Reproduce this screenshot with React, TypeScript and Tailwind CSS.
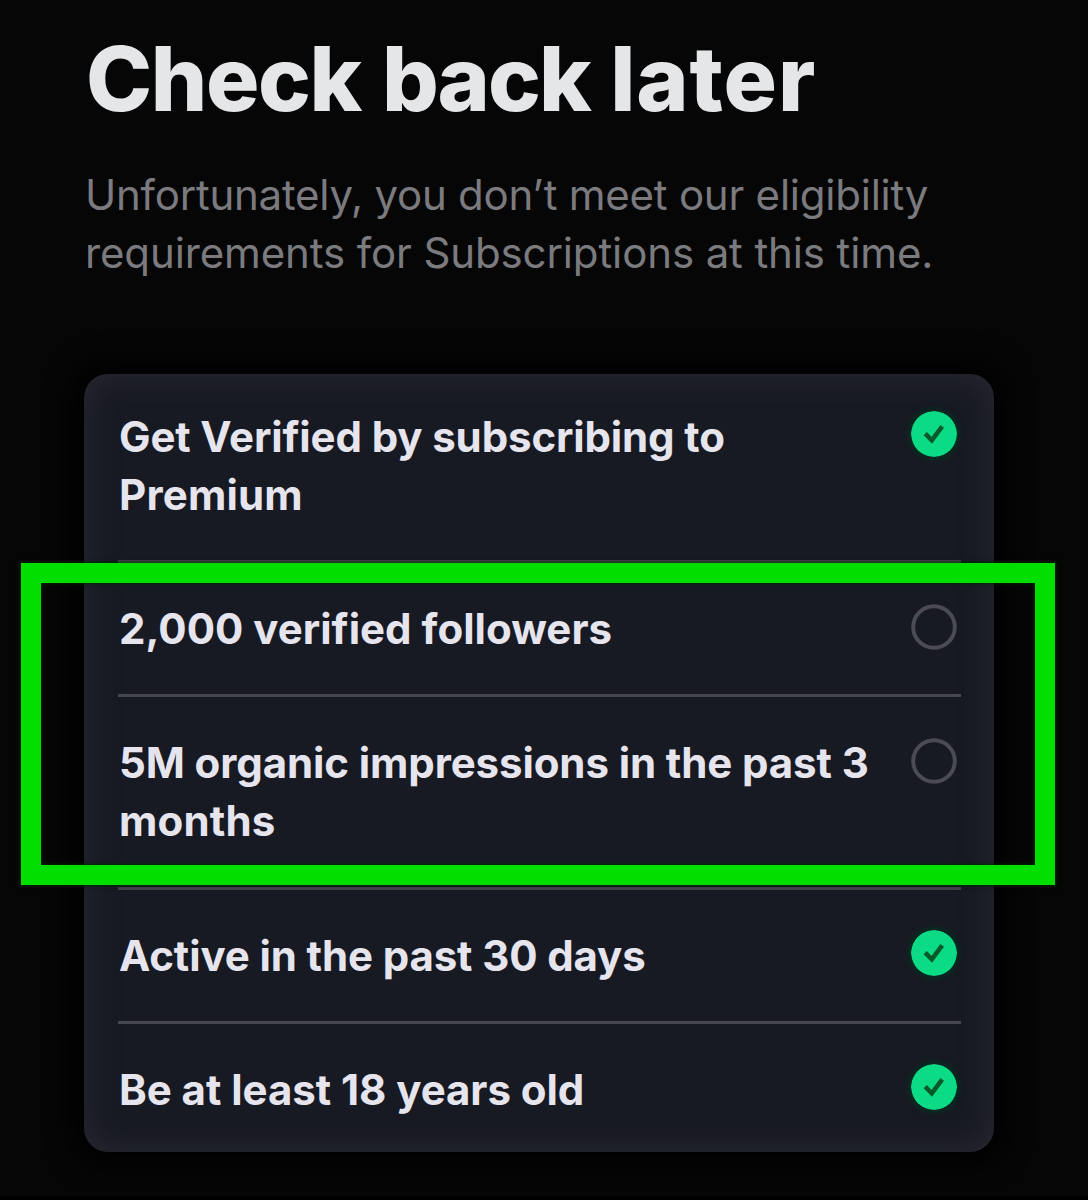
type Line = { text: string; tracking: string };

type Requirement = {
  lines: Line[];
  met: boolean;
  row: string;
};

const requirements: Requirement[] = [
  {
    lines: [
      { text: "Get Verified by subscribing to", tracking: "tracking-[-0.13px]" },
      { text: "Premium", tracking: "tracking-[0.2px]" },
    ],
    met: true,
    row: "border-b-3 pt-[34px] pb-9",
  },
  {
    lines: [{ text: "2,000 verified followers", tracking: "tracking-[0.02px]" }],
    met: false,
    row: "border-b-3 pt-[37px] pb-9",
  },
  {
    lines: [
      { text: "5M organic impressions in the past 3", tracking: "tracking-[-0.1px]" },
      { text: "months", tracking: "tracking-[0.2px]" },
    ],
    met: false,
    row: "border-b-3 pt-[37px] pb-[37px]",
  },
  {
    lines: [{ text: "Active in the past 30 days", tracking: "tracking-[-0.12px]" }],
    met: true,
    row: "border-b-3 pt-[37px] pb-9",
  },
  {
    lines: [{ text: "Be at least 18 years old", tracking: "tracking-[-0.05px]" }],
    met: true,
    row: "pt-[37px] pb-[33px]",
  },
];

function StatusIcon({ met }: { met: boolean }) {
  if (met) {
    return (
      <svg
        viewBox="0 0 46 46"
        className="mt-[3px] mr-1 size-[46px] shrink-0 rounded-full shadow-[0_0_5px_3px_rgba(3,48,32,0.85)]"
      >
        <circle cx="23" cy="23" r="23" fill="#0bdb85" />
        <path d="M14.2 22.6 L20.8 29.4 L31.2 15.4" fill="none" stroke="#07592a" strokeWidth="4.5" />
      </svg>
    );
  }
  return (
    <svg viewBox="0 0 46 46" className="mt-[4px] mr-1 size-[46px] shrink-0">
      <circle cx="23" cy="23" r="20.8" fill="none" stroke="#4c4b54" strokeWidth="3.9" />
    </svg>
  );
}

export default function App() {
  return (
    <main className="relative h-[1200px] w-[1088px] overflow-hidden border-b-4 border-black bg-[#060606] pt-[34px] pr-[94px] pl-[84px] font-['Inter',sans-serif]">
      <h1 className="pl-[2px] text-[89px] leading-[90px] font-extrabold [word-spacing:3px] whitespace-nowrap text-[#e4e6e7]">
        <span className="tracking-[-1.4px]">Check </span>
        <span className="tracking-[-2px]">back </span>
        <span className="tracking-[0.9px]">later</span>
      </h1>
      <p className="mt-[42px] ml-px text-[42px] leading-[58px] whitespace-nowrap text-[#7b7b7f]">
        <span className="block tracking-[-0.23px]">Unfortunately, you don’t meet our eligibility</span>
        <span className="block tracking-[-0.12px]">requirements for Subscriptions at this time.</span>
      </p>

      <ul className="mt-[92px] h-[778px] rounded-[24px] bg-[#181a23] pr-[33px] pl-[34px] shadow-[inset_0_0_32px_rgba(52,54,64,0.6),0_0_28px_10px_#000]">
        {requirements.map((item) => (
          <li
            key={item.lines[0].text}
            className={`flex items-start justify-between border-[#45464e] ${item.row}`}
          >
            <div className="ml-px text-[42px] leading-[58px] font-bold whitespace-nowrap text-[#e6e5ee]">
              {item.lines.map((line) => (
                <span key={line.text} className={`block ${line.tracking}`}>
                  {line.text}
                </span>
              ))}
            </div>
            <StatusIcon met={item.met} />
          </li>
        ))}
      </ul>

      <div className="absolute top-[563px] left-[21px] h-[322px] w-[1034px] border-20 border-[#00df00] shadow-[0_0_4px_1px_rgba(0,40,0,0.85),inset_0_0_4px_1px_rgba(0,40,0,0.85)]" />
    </main>
  );
}
